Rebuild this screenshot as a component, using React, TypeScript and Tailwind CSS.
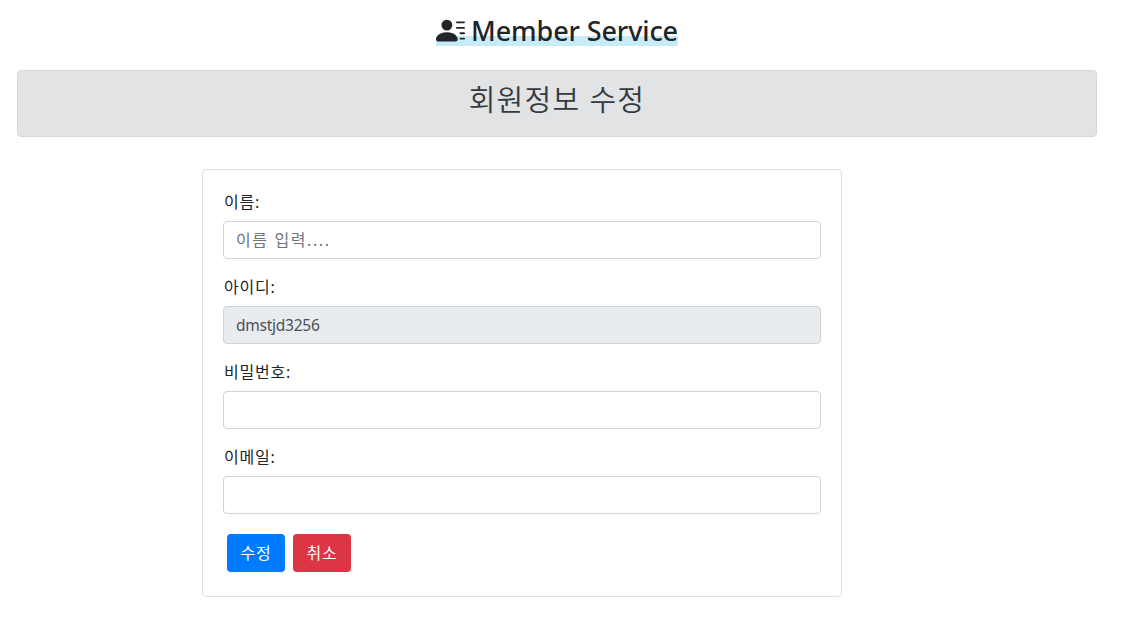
import { BsPersonLinesFill } from "react-icons/bs";

const font = { fontFamily: '"Noto Sans", "Noto Sans CJK KR", sans-serif' };

function Field({ label, children }: { label: string; children: React.ReactNode }) {
  return (
    <div className="mb-4">
      <label className="block h-[23px] mb-2 pt-px pl-px text-base leading-[23px] tracking-[0.8px] text-[#212529]">{label}</label>
      {children}
    </div>
  );
}

const inputCls =
  "block w-full h-[38px] px-3 border border-[#ced4da] rounded text-[15.5px] tracking-[-0.25px] text-[#495057] bg-white placeholder:text-base placeholder:tracking-[1.6px] placeholder:text-[#6c757d] outline-none";

export default function App() {
  return (
    <div className="bg-white min-h-[640px] w-[1113px] overflow-hidden pt-[14px]" style={font}>
      <div className="flex justify-center h-[32px] pl-px">
        <h1 className="flex items-center gap-[6px] h-[32px] text-[27px] leading-[34px] font-[550] tracking-[-0.12px] text-[#212529] bg-[linear-gradient(transparent_70%,#c7ecf8_70%)]">
          <BsPersonLinesFill className="w-[29px] h-[29px]" />
          <span className="pt-px">Member Service</span>
        </h1>
      </div>
      <div className="mx-[17px] w-[1080px] mt-[24px] h-[67px] bg-[#e1e3e5] border border-[#d6d8db] rounded flex justify-center pt-[10px]">
        <h2 className="text-[29px] leading-[38px] font-[350] tracking-[1.3px] text-[#343a40]">회원정보 수정</h2>
      </div>
      <div className="ml-[202px] mt-[32px] w-[640px] h-[428px] border border-[#dfdfdf] rounded px-5 pt-5">
        <Field label="이름:">
          <input className={inputCls} placeholder="이름 입력...." />
        </Field>
        <Field label="아이디:">
          <input className={inputCls + " !bg-[#e9ecef]"} defaultValue="dmstjd3256" readOnly />
        </Field>
        <Field label="비밀번호:">
          <input className={inputCls} type="password" />
        </Field>
        <Field label="이메일:">
          <input className={inputCls} />
        </Field>
        <div className="flex gap-2 ml-1 mt-5">
          <button className="w-[58px] h-[38px] rounded bg-[#007bff] text-white text-base tracking-[0.8px]">수정</button>
          <button className="w-[58px] h-[38px] rounded bg-[#dc3545] text-white text-base tracking-[0.8px]">취소</button>
        </div>
      </div>
    </div>
  );
}
